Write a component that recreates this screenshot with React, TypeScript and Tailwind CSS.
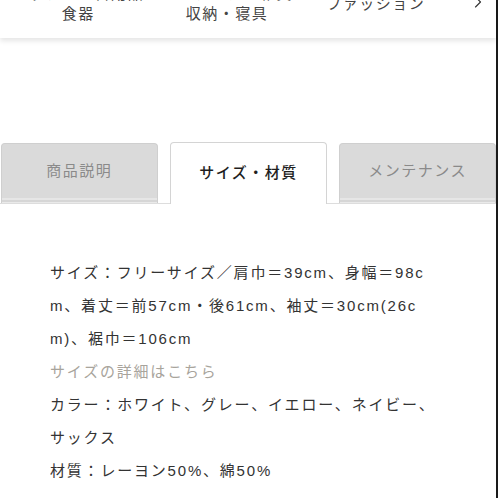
import { ChevronRight } from "lucide-react";

const font = { fontFamily: '"Liberation Sans", "Noto Sans CJK JP", sans-serif' };

const navItems = [
  { top: "キッチン・日用品", bottom: "食器" },
  { top: "インテリア・雑貨", bottom: "収納・寝具" },
  { top: "ファッション", bottom: null },
];

const tabs = [
  { label: "商品説明", active: false },
  { label: "サイズ・材質", active: true },
  { label: "メンテナンス", active: false },
];

export default function App() {
  return (
    <div className="flex h-[498px] w-[498px] overflow-hidden bg-white" style={font}>
      <div className="flex w-[496px] flex-col">
        {/* category strip, scrolled so only its lower half shows */}
        <div className="relative z-10 -mt-[30px] flex h-[68px] items-stretch bg-white shadow-[0_3px_5px_rgba(0,0,0,0.1)]">
          <div className="grid w-[450px] grid-cols-3 pl-[4px]">
            {navItems.map((n) => (
              <div
                key={n.top}
                className="flex flex-col items-center justify-center text-[15px] leading-[20px] tracking-[1.5px] text-[#444]"
              >
                <span>{n.top}</span>
                {n.bottom ? <span>{n.bottom}</span> : null}
              </div>
            ))}
          </div>
          <div className="flex flex-1 items-center justify-end pb-[4px] pr-[8px]">
            <ChevronRight className="h-5 w-5 text-[#333]" strokeWidth={1.3} />
          </div>
        </div>

        {/* tabs */}
        <div className="mt-[104px] flex items-end gap-[12px] border-b border-[#ddd] pl-[1px]">
          {tabs.map((t) =>
            t.active ? (
              <div
                key={t.label}
                className="-mb-px flex h-[62px] w-[158px] items-center justify-center rounded-t-[4px] border border-b-0 border-[#d4d4d4] bg-white text-[15px] font-medium tracking-[1.5px] text-[#1e1e1e]"
              >
                {t.label}
              </div>
            ) : (
              <div
                key={t.label}
                className="flex h-[60px] w-[157px] flex-col rounded-t-[4px] border border-b-0 border-[#cfcfcf] bg-[#dadada] text-[15px] tracking-[1.5px] text-[#8a8a8a]"
              >
                <div className="flex flex-1 items-center justify-center">{t.label}</div>
                <div className="h-[2px] bg-[#e6e6e6]" />
                <div className="h-[2px] bg-[#d6d6d6]" />
                <div className="h-[1px] bg-[#eaeaea]" />
              </div>
            )
          )}
        </div>

        {/* body */}
        <div className="w-[446px] break-all pl-[50px] pt-[52px] text-[15px] leading-[33px] tracking-[1.8px] text-[#333]">
          <p>サイズ：フリーサイズ／肩巾＝39cm、身幅＝98cm、着丈＝前57cm・後61cm、袖丈＝30cm(26cm)、裾巾＝106cm</p>
          <p className="text-[#a8a49c]">サイズの詳細はこちら</p>
          <p>カラー：ホワイト、グレー、イエロー、ネイビー、サックス</p>
          <p>材質：レーヨン50%、綿50%</p>
        </div>
      </div>
      <div className="w-[2px] bg-[#1a1a1a]" />
    </div>
  );
}
